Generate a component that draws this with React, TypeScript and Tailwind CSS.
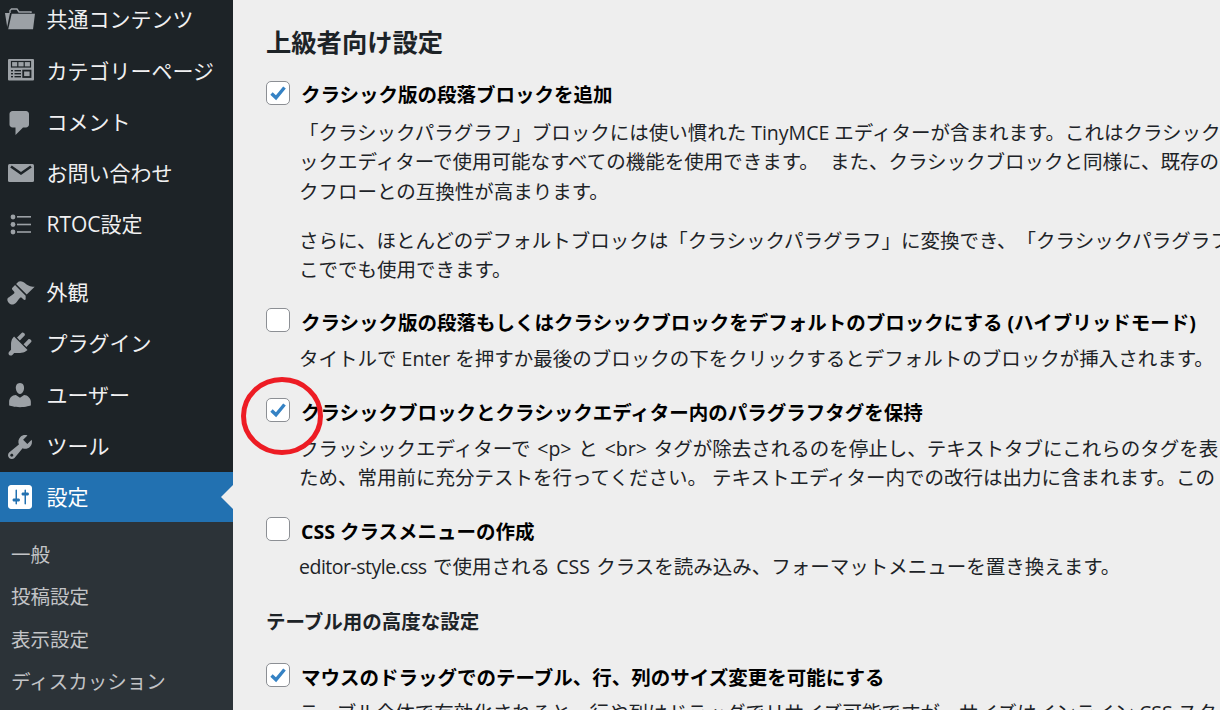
import type { ReactNode } from "react";

const fontStack = "font-['Open_Sans','Noto_Sans_CJK_JP',sans-serif]";

function Dash({ d }: { d: string }) {
    return (
        <svg viewBox="0 0 20 20" className="w-[30px] h-[30px] fill-current">
            <path d={d} />
        </svg>
    );
}

const FolderIcon = () => (
    <svg viewBox="0 0 30 30" className="w-[30px] h-[30px] fill-current">
        <path d="M0 8h5L2.2 22z" />
        <path d="M5 8V5.5L6.5 4h5.5l2 3h12v1" fill="none" stroke="currentColor" strokeWidth="1.4" />
        <path d="M6.7 8.8H30l-2 15.5H3.2z" />
    </svg>
);

const TableIcon = () => (
    <svg viewBox="0 0 30 30" className="w-[30px] h-[30px]">
        <rect x="3" y="3" width="26" height="21.5" rx="1" className="fill-current" />
        <g fill="none" stroke="#1d2327" strokeWidth="1.2">
            <rect x="6.5" y="5.5" width="19" height="5.5" />
            <path d="M12.8 5.5v5.5M19.2 5.5v5.5" />
            <rect x="18.2" y="14.6" width="7.3" height="6.4" strokeWidth="1.8" />
        </g>
        <g fill="#1d2327">
            <rect x="6" y="14" width="2" height="1.4" />
            <rect x="9.5" y="14" width="6.5" height="1.4" />
            <rect x="6" y="17" width="2" height="1.4" />
            <rect x="9.5" y="17" width="6.5" height="1.4" />
            <rect x="6" y="20" width="2" height="1.4" />
            <rect x="9.5" y="20" width="6.5" height="1.4" />
        </g>
    </svg>
);

const MailIcon = () => (
    <svg viewBox="0 0 30 30" className="w-[30px] h-[30px]">
        <rect x="3" y="5" width="26" height="18" rx="1.5" className="fill-current" />
        <path d="M6 7.5l10 7 10-7" fill="none" stroke="#1d2327" strokeWidth="2.6" />
    </svg>
);

const ListIcon = () => (
    <svg viewBox="0 0 30 30" className="w-[30px] h-[30px] fill-current">
        <circle cx="8" cy="7" r="2.4" />
        <circle cx="8" cy="14.5" r="2.4" />
        <circle cx="8" cy="22" r="2.4" />
        <rect x="12" y="6" width="14" height="1.6" />
        <rect x="12" y="13.7" width="14" height="1.6" />
        <rect x="12" y="21.2" width="14" height="1.6" />
    </svg>
);

const comment = "M5 2h9c1.1 0 2 .9 2 2v7c0 1.1-.9 2-2 2h-2l-5 5v-5H5c-1.1 0-2-.9-2-2V4c0-1.1.9-2 2-2z";
const brush = "M14.48 11.06L7.41 3.99l1.5-1.5c.5-.56 2.3-.47 3.51.32 1.21.8 1.43 1.28 2.91 2.1 1.18.64 2.45 1.26 4.45.85zm-.71.71L6.7 4.7 4.93 6.47c-.39.39-.39 1.02 0 1.41l1.06 1.06c.39.39.39 1.03 0 1.42-.6.6-1.43 1.11-2.21 1.69-.35.26-.7.53-1.01.84C1.43 13.23.99 15.02 2.6 16.64c1.62 1.62 3.41 1.18 4.75-.16.31-.31.58-.66.84-1.01.58-.78 1.09-1.61 1.69-2.21.39-.39 1.03-.39 1.42 0l1.06 1.06c.39.39 1.02.39 1.41 0z";
const plugin = "M13.11 4.36L9.87 7.6 8 5.73l3.24-3.24c.35-.34 1.05-.2 1.56.32.52.51.66 1.21.31 1.55zm-8 1.77l.91-1.12 9.01 9.01-1.19.84c-.71.71-2.63 1.16-3.82 1.16H6.14L4.9 17.26c-.59.59-1.54.59-2.12 0-.59-.58-.59-1.53 0-2.12l1.24-1.24v-3.88c0-1.13.4-3.19 1.09-3.89zm7.26 3.97l3.24-3.24c.34-.35 1.04-.21 1.55.31.52.51.66 1.21.31 1.55l-3.24 3.25z";
const user = "M10 9.25c-2.27 0-2.73-3.44-2.73-3.44C7 4.02 7.82 2 9.97 2c2.16 0 2.98 2.02 2.71 3.81 0 0-.41 3.44-2.68 3.44zm0 2.57L12.72 10c2.39 0 4.52 2.33 4.52 4.53v2.49s-3.65 1.13-7.24 1.13c-3.65 0-7.24-1.13-7.24-1.13v-2.49c0-2.25 1.94-4.48 4.47-4.48z";
const wrench = "M16.68 9.77c-1.34 1.34-3.3 1.67-4.95.99l-5.41 6.52c-.99.99-2.59.99-3.58 0s-.99-2.59 0-3.57l6.52-5.42c-.68-1.65-.35-3.61.99-4.95 1.28-1.28 3.12-1.62 4.72-1.06l-2.89 2.89 2.82 2.82 2.86-2.87c.53 1.58.18 3.39-1.08 4.65zM3.81 16.21c.4.39 1.04.39 1.43 0 .4-.4.4-1.04 0-1.43-.39-.4-1.03-.4-1.43 0-.39.39-.39 1.03 0 1.43z";
const sliders = "M18 16V4c0-1.1-.9-2-2-2H4c-1.1 0-2 .9-2 2v12c0 1.1.9 2 2 2h12c1.1 0 2-.9 2-2zM8 11h1c.55 0 1 .45 1 1s-.45 1-1 1H8v1.5c0 .28-.22.5-.5.5s-.5-.22-.5-.5V13H6c-.55 0-1-.45-1-1s.45-1 1-1h1V5.5c0-.28.22-.5.5-.5s.5.22.5.5V11zm5-2h-1c-.55 0-1-.45-1-1s.45-1 1-1h1V5.5c0-.28.22-.5.5-.5s.5.22.5.5V7h1c.55 0 1 .45 1 1s-.45 1-1 1h-1v5.5c0 .28-.22.5-.5.5s-.5-.22-.5-.5V9z";

function MenuRow({ icon, label }: { icon: ReactNode; label: string }) {
    return (
        <div className="flex items-center h-[51.25px] pl-[5px] text-[#f0f0f1]">
            <span className="w-[41.5px] shrink-0 text-[#9ca1a6]">{icon}</span>
            <span className="text-[21px]">{label}</span>
        </div>
    );
}

function Sidebar() {
    return (
        <aside className="w-[233px] shrink-0 h-full bg-[#1d2327] flex flex-col">
            <div className="mt-[-5.5px]">
                <MenuRow icon={<FolderIcon />} label="共通コンテンツ" />
                <MenuRow icon={<TableIcon />} label="カテゴリーページ" />
                <MenuRow icon={<Dash d={comment} />} label="コメント" />
                <MenuRow icon={<MailIcon />} label="お問い合わせ" />
                <MenuRow icon={<ListIcon />} label="RTOC設定" />
            </div>
            <div className="mt-[16.5px]">
                <MenuRow icon={<Dash d={brush} />} label="外観" />
                <MenuRow icon={<Dash d={plugin} />} label="プラグイン" />
                <MenuRow icon={<Dash d={user} />} label="ユーザー" />
                <MenuRow icon={<Dash d={wrench} />} label="ツール" />
            </div>
            <div className="relative flex items-center h-[50px] pl-[5px] bg-[#2271b1] text-white">
                <span className="w-[41.5px] shrink-0">
                    <Dash d={sliders} />
                </span>
                <span className="text-[21px]">設定</span>
                <span className="absolute right-0 top-[13px] border-y-[12px] border-y-transparent border-r-[12px] border-r-[#eeeeee]" />
            </div>
            <div className="flex-1 bg-[#2c3338] pt-[11px] pl-[11px] text-[#c3c4c7] text-[19.5px]">
                <div className="h-[42.4px] flex items-center">一般</div>
                <div className="h-[42.4px] flex items-center">投稿設定</div>
                <div className="h-[42.4px] flex items-center">表示設定</div>
                <div className="h-[42.4px] flex items-center">ディスカッション</div>
            </div>
        </aside>
    );
}

function Check({ checked }: { checked: boolean }) {
    return (
        <span className="w-[24px] h-[24px] shrink-0 rounded-[5px] border border-[#8c8f94] bg-white flex items-center justify-center">
            {checked && (
                <svg viewBox="0 0 20 20" className="w-[20px] h-[20px]">
                    <path d="M3.5 10.5l4.5 4.3 8.5-10.3" fill="none" stroke="#3582c4" strokeWidth="3.4" />
                </svg>
            )}
        </span>
    );
}

function Option({ checked, label, className, children }: { checked: boolean; label: string; className: string; children?: ReactNode }) {
    return (
        <div className={className}>
            <div className="flex items-center h-[29px]">
                <Check checked={checked} />
                <strong className="ml-[11px] font-bold text-[19.5px] text-black relative top-[2.5px]">{label}</strong>
            </div>
            <div className="pl-[33px] text-[19.5px] leading-[29.3px] text-[#1d2327]">{children}</div>
        </div>
    );
}

export default function App() {
    return (
        <div className={`relative flex w-[1220px] h-[710px] overflow-hidden bg-[#eeeeee] whitespace-nowrap [text-spacing-trim:space-all] ${fontStack}`}>
            <Sidebar />
            <main className="flex-1 min-w-0 pl-[33px] pt-[24px] overflow-hidden">
                <h2 className="text-[25.3px] leading-[36px] font-bold text-[#1d2327]">上級者向け設定</h2>
                <Option checked label="クラシック版の段落ブロックを追加" className="mt-[18px]">
                    <p className="mt-[11px]">「クラシックパラグラフ」ブロックには使い慣れた TinyMCE エディターが含まれます。これはクラシック</p>
                    <p>ックエディターで使用可能なすべての機能を使用できます。 <span className="ml-[6px]">また、クラシックブロックと同様に、既存の</span></p>
                    <p>クフローとの互換性が高まります。</p>
                    <p className="mt-[20px]">さらに、ほとんどのデフォルトブロックは「クラシックパラグラフ」に変換でき、「クラシックパラグラフ</p>
                    <p>こででも使用できます。</p>
                </Option>
                <Option checked={false} label="クラシック版の段落もしくはクラシックブロックをデフォルトのブロックにする (ハイブリッドモード)" className="mt-[21px]">
                    <p className="mt-[10px]">タイトルで Enter を押すか最後のブロックの下をクリックするとデフォルトのブロックが挿入されます。</p>
                </Option>
                <Option checked label="クラシックブロックとクラシックエディター内のパラグラフタグを保持" className="mt-[22px]">
                    <p className="mt-[9px] [word-spacing:1.75px]">クラッシックエディターで &lt;p&gt; と &lt;br&gt; タグが除去されるのを停止し、テキストタブにこれらのタグを表</p>
                    <p>ため、常用前に充分テストを行ってください。 テキストエディター内での改行は出力に含まれます。この</p>
                </Option>
                <Option checked={false} label="CSS クラスメニューの作成" className="mt-[22px]">
                    <p className="mt-[9px] [word-spacing:1.2px]">
                        <span className="tracking-[-0.5px]">editor-style.css</span> で使用される CSS クラスを読み込み、フォーマットメニューを置き換えます。
                    </p>
                </Option>
                <h3 className="mt-[25px] text-[19.5px] leading-[29px] font-bold text-[#1d2327]">テーブル用の高度な設定</h3>
                <Option checked label="マウスのドラッグでのテーブル、行、列のサイズ変更を可能にする" className="mt-[25px]">
                    <p className="mt-[8px]">テーブル全体で有効化されると、行や列はドラッグでリサイズ可能ですが、サイズはインライン CSS スタ</p>
                </Option>
            </main>
            <svg viewBox="0 0 82 78" className="absolute left-[241px] top-[377px] w-[82px] h-[78px] pointer-events-none">
                <ellipse cx="41" cy="39" rx="38.5" ry="36.5" fill="none" stroke="#ed1c24" strokeWidth="5" />
            </svg>
        </div>
    );
}
